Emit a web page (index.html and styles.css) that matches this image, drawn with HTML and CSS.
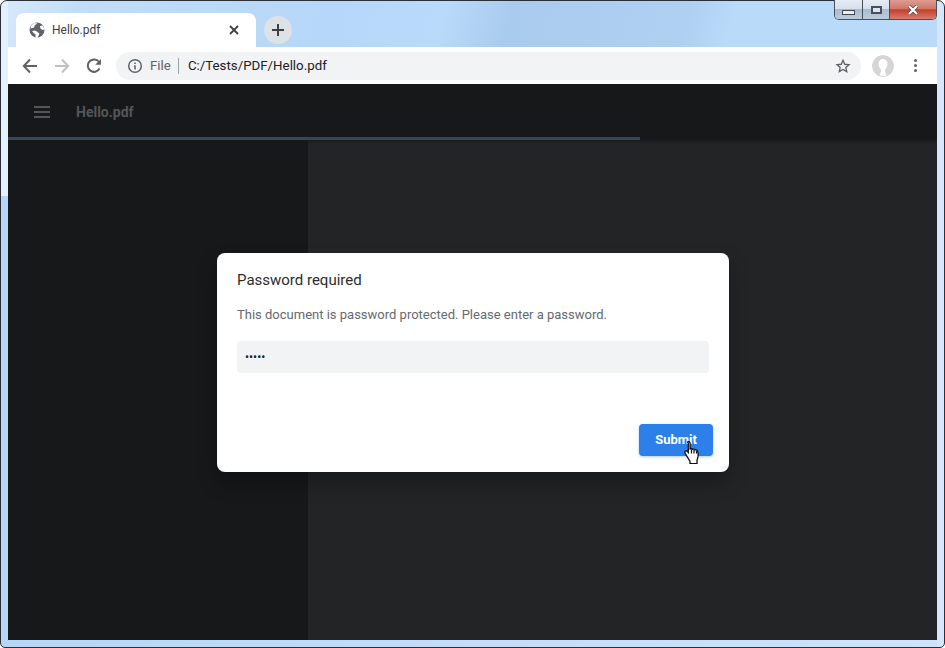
FILE: index.html
```html
<!DOCTYPE html>
<html lang="en">
<head>
	<meta charset="UTF-8">
	<title>Hello.pdf</title>
	<link rel="stylesheet" href="styles.css">
</head>
<body>

<div class="window">
	<div class="tabstrip">
		<div class="tab">
			<svg class="globe" width="16" height="16" viewBox="0 0 16 16"><circle cx="8" cy="8" r="7.500" fill="#5f6368"/><path d="M1.500 6.500L5 5.500l1-2.500 2.500-1.500-3-.5L2.500 3zM8 9.500l-2.500-1-2.500.5 2 2.500 1.500.5v3.500l2 .2 2-4zM11 4l2.800-.5 1.700 4-2 .5-2-1.500z" fill="#fff"/></svg>
			<span class="tab_title">Hello.pdf</span>
			<svg class="tab_close" width="10" height="10" viewBox="0 0 10 10"><path d="M1 1l8 8M9 1l-8 8" stroke="#3c4043" stroke-width="1.800" fill="none"/></svg>
		</div>
		<div class="newtab">
			<svg width="14" height="14" viewBox="0 0 14 14"><path d="M7 1v12M1 7h12" stroke="#3c4043" stroke-width="2" fill="none"/></svg>
		</div>
		<div class="caption">
			<div class="cap_btn"><span class="cap_min"></span></div>
			<div class="cap_btn"><span class="cap_max"></span></div>
			<div class="cap_btn cap_close">
				<svg width="12" height="10" viewBox="0 0 12 10"><path d="M2 1l8 8M10 1l-8 8" stroke="#4a4a4a" stroke-width="3.600" fill="none"/><path d="M2 1l8 8M10 1l-8 8" stroke="#fff" stroke-width="2.200" fill="none"/></svg>
			</div>
		</div>
	</div>

	<div class="inner">
		<div class="toolbar">
			<svg class="nav" width="16" height="16" viewBox="0 0 16 16"><path d="M15 8H2M8 1.500L1.800 8 8 14.500" stroke="#5f6368" stroke-width="2" fill="none"/></svg>
			<svg class="nav" width="16" height="16" viewBox="0 0 16 16"><path d="M1 8h13M8 1.500L14.200 8 8 14.500" stroke="#bdc1c6" stroke-width="2" fill="none"/></svg>
			<svg class="nav" width="16" height="16" viewBox="0 0 16 16"><path d="M13.500 10.500A6.200 6.200 0 1 1 13 4" stroke="#5f6368" stroke-width="2" fill="none"/><path d="M15 1v5.800H9.200z" fill="#5f6368"/></svg>
			<div class="omnibox">
				<svg width="16" height="16" viewBox="0 0 16 16"><circle cx="8" cy="8" r="6.300" stroke="#5f6368" stroke-width="1.500" fill="none"/><path d="M8 7.200v4.300M8 4.400v1.600" stroke="#5f6368" stroke-width="1.600"/></svg>
				<span class="scheme">File</span>
				<span class="url">C:/Tests/PDF/Hello.pdf</span>
				<svg class="star" width="16" height="16" viewBox="0 0 24 24"><path d="M12 3.500l2.600 5.900 6.400.6-4.800 4.200 1.400 6.300L12 17.200l-5.600 3.300 1.400-6.300L3 10l6.400-.6z" stroke="#5f6368" stroke-width="2" fill="none"/></svg>
			</div>
			<div class="avatar">
				<svg width="22" height="22" viewBox="0 0 22 22"><circle cx="11" cy="11" r="11" fill="#d5d5d5"/><path d="M11 4c-3 0-4.500 2.400-4.500 5 0 3 2 4.500 2.500 6 .3 1.500-.5 3-1.500 5 2 1.300 5.500 1.300 7 0-1-2-1.800-3.500-1.500-5 .5-1.500 2.500-3 2.500-6 0-2.600-1.500-5-4.500-5z" fill="#fff"/></svg>
			</div>
			<div class="menu_dots"><i></i><i></i><i></i></div>
		</div>

		<div class="viewer">
			<div class="viewer_top">
				<div class="hamburger"><i></i><i></i><i></i></div>
				<span class="doc_title">Hello.pdf</span>
			</div>
			<div class="progress"><div class="progress_fill"></div></div>
			<div class="viewer_body">
				<div class="sidenav"></div>
				<div class="pages"></div>
			</div>

			<div class="dialog">
				<div class="dialog_title">Password required</div>
				<div class="dialog_msg">This document is password protected. Please enter a password.</div>
				<input class="dialog_input" type="password" value="abcde">
				<div class="dialog_btns">
					<button class="submit">Submit</button>
				</div>
				<svg class="hand" width="18" height="23" viewBox="0 0 18 23"><path d="M4.500.6c1 0 1.600.7 1.600 1.700v5.600c.8-.5 1.900-.4 2.400.4.800-.5 2-.3 2.500.6.900-.4 2.100 0 2.500 1 .7 1.500.8 3.500.5 5.500l-1 4.200v3H6v-2.200L1.200 12.300c-.6-.9-.4-1.900.3-2.300.7-.4 1.500-.1 2 .5l.8 1V2.300C3.300 1.300 3.700.6 4.500.6z" transform="translate(1 0)" fill="#fff" stroke="#111" stroke-width="1.300"/><path d="M8.500 8.500v4M11 9v3.500M13.500 10v2.500" stroke="#111" stroke-width="1.200" fill="none"/></svg>
			</div>
		</div>
	</div>
</div>

</body>
</html>
```

FILE: styles.css
```css
*{
	margin: 0;
	padding: 0;
	box-sizing: border-box;
}
html, body{
	width: 945px;
	height: 648px;
	overflow: hidden;
	background: #fff;
}
body{
	font-family: Roboto, "Liberation Sans", sans-serif;
}

.window{
	width: 945px;
	height: 648px;
	padding: 0 7px 7px;
	border: 1px solid #2b3038;
	border-radius: 7px 7px 5px 5px;
	background:
		linear-gradient(#e5f0fd, #e5f0fd) 0 0 / 7px 195px no-repeat,
		linear-gradient(#b6d6f8, #b6d6f8) 0 195px / 7px 100% no-repeat,
		linear-gradient(#d5e7fc, #d5e7fc) 100% 0 / 7px 100% no-repeat,
		linear-gradient(90deg, #b6d6f8, #cfe3fb) 0 100% / 100% 7px no-repeat,
		linear-gradient(105deg, #d8e9fc 0%, #c0dcf8 8%, #b6d7f9 30%, #b9daf9 40%, #a9cbee 46%, #b0d0f2 62%, #b9daf9 66%, #b9daf9 88%, #d3e5fb 100%);
	display: flex;
	flex-direction: column;
}

.tabstrip{
	height: 46px;
	flex: none;
	display: flex;
	align-items: flex-end;
	position: relative;
}
.tab{
	width: 240px;
	height: 34px;
	padding: 0 17px 0 13px;
	background: #fff;
	border-radius: 8px 8px 0 0;
	display: flex;
	align-items: center;
	margin-left: 8px;
}
.tab_title{
	margin-left: 7px;
	font-size: 12px;
	color: #3c4043;
	flex: 1;
}
.newtab{
	width: 28px;
	height: 28px;
	margin: 0 0 3px 8px;
	border-radius: 50%;
	background: #dee1e6;
	display: flex;
	align-items: center;
	justify-content: center;
}

.caption{
	position: absolute;
	top: -1px;
	right: 0;
	height: 20px;
	display: flex;
	border: 1px solid #4a5058;
	border-top: none;
	border-radius: 0 0 5px 5px;
	overflow: hidden;
}
.cap_btn{
	width: 28px;
	height: 19px;
	background: linear-gradient(#e4ecf5 0%, #d6e0ec 45%, #a9bccf 50%, #bccbdb 100%);
	border-right: 1px solid #4a5058;
	display: flex;
	align-items: center;
	justify-content: center;
}
.cap_btn:nth-child(2){
	width: 27px;
}
.cap_close{
	width: 46px;
	border-right: none;
	background: linear-gradient(#dc9d90 0%, #d0776a 45%, #c63d2a 52%, #d87d6e 100%);
}
.cap_min{
	width: 13px;
	height: 5px;
	margin-top: 6px;
	background: #e9eef3;
	border: 1px solid #3f4650;
}
.cap_max{
	width: 11px;
	height: 8px;
	background: #dbe4ee;
	border: 2px solid #46505c;
}

.inner{
	flex: 1;
	display: flex;
	flex-direction: column;
	min-height: 0;
}

.toolbar{
	height: 37px;
	flex: none;
	background: #fff;
	display: flex;
	align-items: center;
	padding-left: 14px;
	gap: 16px;
}
.omnibox{
	width: 745px;
	height: 28px;
	margin-left: -2px;
	padding: 0 10px 0 11px;
	background: #f1f3f4;
	border-radius: 14px;
	display: flex;
	align-items: center;
}
.scheme{
	margin-left: 7px;
	padding-right: 7px;
	font-size: 13.300px;
	line-height: 16px;
	color: #5f6368;
	border-right: 1px solid #9aa0a6;
}
.url{
	margin-left: 9px;
	font-size: 13.300px;
	color: #202124;
	flex: 1;
}
.avatar{
	width: 22px;
	height: 22px;
	margin-left: -5px;
	border-radius: 50%;
	overflow: hidden;
}
.menu_dots{
	margin-left: 4px;
	display: flex;
	flex-direction: column;
	gap: 2px;
}
.menu_dots i{
	display: block;
	width: 3px;
	height: 3px;
	background: #5f6368;
	border-radius: 50%;
}

.viewer{
	flex: 1;
	background: #17181a;
	display: flex;
	flex-direction: column;
	position: relative;
	min-height: 0;
}
.viewer_top{
	height: 53px;
	flex: none;
	display: flex;
	align-items: center;
	padding: 2px 0 0 26px;
}
.hamburger{
	display: flex;
	flex-direction: column;
	gap: 3px;
}
.hamburger i{
	display: block;
	width: 16px;
	height: 2px;
	background: #545557;
}
.doc_title{
	margin-left: 26px;
	font-size: 14px;
	font-weight: 700;
	color: #545557;
}
.progress{
	height: 3px;
	flex: none;
}
.progress_fill{
	width: 632px;
	height: 3px;
	background: #364661;
}
.viewer_body{
	flex: 1;
	display: flex;
	min-height: 0;
}
.sidenav{
	width: 300px;
	background: #17181a;
}
.pages{
	flex: 1;
	background: linear-gradient(#1a1b1d 0, #232426 4px);
}

.dialog{
	position: absolute;
	left: 209px;
	top: 169px;
	width: 512px;
	height: 219px;
	padding: 18px 20px 16px;
	background: #fff;
	border-radius: 8px;
	box-shadow: 0 10px 20px rgba(0,0,0,0.3);
	display: flex;
	flex-direction: column;
}
.dialog_title{
	font-size: 15px;
	line-height: 19px;
	color: #2b2c2f;
}
.dialog_msg{
	margin-top: 15px;
	font-size: 13px;
	line-height: 20px;
	color: #66696e;
}
.dialog_input{
	margin-top: 16px;
	width: 472px;
	height: 32px;
	padding: 0 8px;
	border: none;
	border-radius: 4px;
	background: #f1f3f4;
	font-family: Roboto, sans-serif;
	font-size: 12px;
	color: #202124;
	outline: none;
}
.dialog_btns{
	margin-top: auto;
	margin-right: -4px;
	display: flex;
	justify-content: flex-end;
}
.submit{
	width: 74px;
	height: 32px;
	padding-bottom: 2px;
	border: none;
	border-radius: 4px;
	background: #2d80ea;
	color: #fff;
	font-family: Roboto, sans-serif;
	font-size: 13px;
	font-weight: 700;
	box-shadow: 0 1px 3px rgba(45,128,234,0.4);
}
.hand{
	position: absolute;
	left: 466px;
	top: 188px;
}
```
